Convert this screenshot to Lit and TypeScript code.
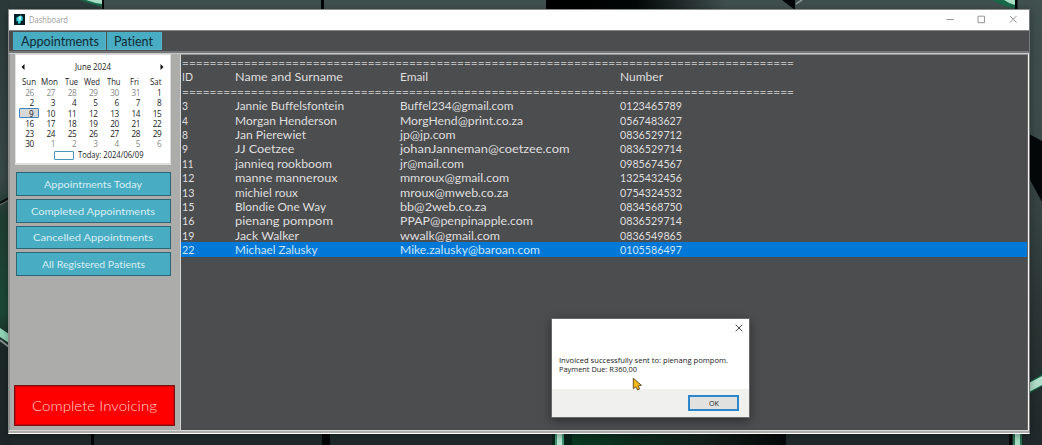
import { LitElement, html, css, svg } from "lit";
import { customElement, property } from "lit/decorators.js";

/* A single line of text stretched horizontally to a given width. */
@customElement("fit-text")
class FitText extends LitElement {
  static styles = css`
    :host { display: block; white-space: nowrap; font-variant-ligatures: none; }
    .line { display: inline-block; transform-origin: 0 50%; }
  `;
  @property() text = "";
  @property({ type: Number }) width = 0;

  updated() {
    this.style.width = `${this.width}px`;
    const line = this.renderRoot.querySelector(".line") as HTMLElement;
    line.style.transform = "none";
    const natural = line.getBoundingClientRect().width;
    if (natural > 0) line.style.transform = `scaleX(${this.width / natural})`;
  }

  render() {
    return html`<span class="line">${this.text}</span>`;
  }
}

const fit = (text: string, width: number) =>
  html`<fit-text .text=${text} .width=${width}></fit-text>`;

type Cell = [string, number];

const patients: Cell[][] = [
  [["3", 6], ["Jannie Buffelsfontein", 109], ["Buffel234@gmail.com", 113.5], ["0123465789", 62]],
  [["4", 6], ["Morgan Henderson", 102], ["MorgHend@print.co.za", 123], ["0567483627", 62]],
  [["8", 6], ["Jan Pierewiet", 71], ["jp@jp.com", 55.5], ["0836529712", 62]],
  [["9", 6], ["JJ Coetzee", 59.5], ["johanJanneman@coetzee.com", 169.5], ["0836529714", 62]],
  [["11", 11.5], ["jannieq rookboom", 97], ["jr@mail.com", 64], ["0985674567", 62]],
  [["12", 12.5], ["manne manneroux", 102.5], ["mmroux@gmail.com", 109], ["1325432456", 62]],
  [["13", 12.5], ["michiel roux", 63], ["mroux@mweb.co.za", 108.5], ["0754324532", 62]],
  [["15", 12.5], ["Blondie One Way", 91], ["bb@2web.co.za", 86.5], ["0834568750", 62]],
  [["16", 12.5], ["pienang pompom", 98], ["PPAP@penpinapple.com", 133], ["0836529714", 62]],
  [["19", 12.5], ["Jack Walker", 64], ["wwalk@gmail.com", 100], ["0836549865", 62]],
  [["22", 12.5], ["Michael Zalusky", 82.5], ["Mike.zalusky@baroan.com", 140], ["0105586497", 62]],
];
const columns: Cell[] = [["ID", 11], ["Name and Surname", 108], ["Email", 28], ["Number", 43]];
const divider = "=".repeat(89);

const days: Cell[] = [["Sun", 14], ["Mon", 17], ["Tue", 13], ["Wed", 16], ["Thu", 13.5], ["Fri", 9], ["Sat", 11.5]];
const dates = [
  26, 27, 28, 29, 30, 31, 1, 2, 3, 4, 5, 6, 7, 8, 9, 10, 11, 12, 13, 14, 15, 16, 17, 18, 19, 20,
  21, 22, 23, 24, 25, 26, 27, 28, 29, 30, 1, 2, 3, 4, 5, 6,
];

const wallpaper = svg`
  <defs>
    <linearGradient id="base" x1="0" y1="0" x2="0" y2="1">
      <stop offset="0" stop-color="#40504f"/><stop offset=".35" stop-color="#3c4a49"/>
      <stop offset=".75" stop-color="#283332"/><stop offset="1" stop-color="#1f292b"/>
    </linearGradient>
    <linearGradient id="left" x1="0" y1="0" x2="0" y2="1">
      <stop offset="0" stop-color="#2b3939"/><stop offset=".4" stop-color="#3a4949"/>
      <stop offset=".48" stop-color="#223d33"/><stop offset=".7" stop-color="#1c4a37"/>
      <stop offset=".78" stop-color="#1c2828"/><stop offset="1" stop-color="#1d2729"/>
    </linearGradient>
    <linearGradient id="shade"><stop offset="0" stop-color="#000"/><stop offset=".5" stop-color="#030707"/><stop offset="1" stop-color="#40504f"/></linearGradient>
    <linearGradient id="glow"><stop offset="0" stop-color="#0a3a22"/><stop offset=".6" stop-color="#13201c"/><stop offset="1" stop-color="#050909"/></linearGradient>
  </defs>
  <rect width="1042" height="445" fill="url(#base)"/>
  <rect width="101" height="10" fill="#2c3c3b"/>
  <rect width="10" height="445" fill="url(#left)"/>
  <path d="M80 0H103V7Q90 4 80 0Z" fill="#17694a"/>
  <path d="M86 0H102V4Q94 3 86 0Z" fill="#a9dec5"/>
  <rect x="102" width="2" height="10" fill="#020505"/>
  <rect x="321" width="3" height="10" fill="#020505"/>
  <rect x="546" width="180" height="10" fill="url(#shade)"/>
  <path d="M782 0H795V10Z" fill="#020505"/>
  <path d="M796 4L802 0" stroke="#9aa3a2" stroke-width="1.5"/>
  <path d="M992 0H1016V9Q1000 5 992 0Z" fill="#17694a"/>
  <path d="M1004 0H1015V5Q1008 3 1004 0Z" fill="#a9dec5"/>
  <rect x="1015" width="2.5" height="10" fill="#020505"/>
  <path d="M0 203L9 198" stroke="#050909" stroke-width="2"/>
  <path d="M0 205L9 200" stroke="#68716f"/>
  <path d="M0 328L9 334V343L0 337Z" fill="#93d5b7"/>
  <path d="M0 340L9 347" stroke="#879490" stroke-width="2"/>
  <path d="M1029 134L1042 141V202L1029 178Z" fill="#040808"/>
  <path d="M1029 382L1042 374V386L1029 394Z" fill="#155a3e"/>
  <path d="M1029 383L1042 376V385L1029 392Z" fill="#b1dfcb"/>
  <rect x="91" y="433" width="3" height="12" fill="#020505"/>
  <rect x="322" y="433" width="8" height="12" fill="#020505"/>
  <rect x="552" y="433" width="20" height="12" fill="#06251a"/>
  <rect x="555" y="433" width="9" height="12" fill="#3f9b77"/>
  <rect x="557" y="433" width="5" height="12" fill="#b5e3cf"/>
  <rect x="572" y="433" width="214" height="12" fill="url(#glow)"/>
  <rect x="780" y="433" width="6" height="12" fill="#050909"/>
  <rect x="1009" y="433" width="3" height="12" fill="#020505"/>
  <rect x="1013" y="433" width="9" height="12" fill="#27704f"/>
  <rect x="1015" y="433" width="5" height="12" fill="#a8dcc4"/>
`;

@customElement("app-root")
class AppRoot extends LitElement {
  static styles = css`
    * { box-sizing: border-box; }
    :host {
      display: block; position: relative; width: 1042px; height: 445px; overflow: hidden;
      font-family: Lato, "Open Sans", sans-serif; color: #dfdfdf; padding: 9px 0 0 8px;
    }
    .wallpaper { position: absolute; inset: 0; }
    .window {
      position: relative; width: 1022px; height: 425px; display: flex; flex-direction: column;
      background: #4c4d4f; border: 1px solid #8b8e8d; border-right-color: #77797a; border-bottom-color: #fff;
      box-shadow: 0 2px 8px rgba(0, 0, 0, .35);
    }
    .title {
      height: 21px; flex: none; display: flex; align-items: center; background: #fff;
      border-bottom: 1px solid #858588; color: #999; padding: 0 11px 1px 5px;
      font: 8.6px/12px "Open Sans", sans-serif;
    }
    .logo { width: 11px; height: 11px; margin-right: 3.5px; }
    .controls { margin-left: auto; }
    .menu { height: 21px; flex: none; display: flex; gap: 1px; padding: 1px 4px; }
    .menu-item {
      background: #48acc3; color: #112a34; height: 18px; font-size: 12.5px; line-height: 19.4px;
      border: 1px solid #58b4c8; border-width: 0 1px 1px 0;
    }
    .menu-item.first { width: 93px; padding-left: 7.5px; }
    .menu-item.second { width: 55px; padding-left: 7px; }
    .rule { height: 3px; flex: none; background: #76777a; border-bottom: 1px solid #c9c9c9; margin-top: -1px; }
    .body { flex: 1; display: flex; min-height: 0; border-right: 1px solid #f4f4f4; }
    .side {
      width: 171px; display: flex; flex-direction: column; background: #acacaa;
      border-left: 1px solid #8c8c8b; padding: 0 5px 4px 4px;
    }
    .calendar {
      width: 156px; height: 111px; background: #fff; border: 1px solid #dedede; border-bottom-width: 2px;
      color: #222; font: 8.3px/10px "Open Sans", sans-serif; margin: 0 0 7px 1px;
    }
    .month { display: flex; align-items: center; justify-content: space-between; height: 17px; padding: 7px 6px 0 5px; margin-bottom: 4px; }
    .days { display: grid; grid-template-columns: repeat(7, 21.25px); height: 11px; padding-left: 2px; margin-bottom: 0; }
    .day { display: flex; justify-content: center; line-height: 11px; }
    .dates { display: grid; grid-template-columns: repeat(7, 21.25px); grid-auto-rows: 10.3px; padding-left: 2px; }
    .date { text-align: right; padding-right: 5.3px; font-size: 8.2px; letter-spacing: -.3px; line-height: 11.6px; }
    .muted { color: #888; }
    .today { background: #d8d8d8; border: 1px solid #4182ba; padding-right: 5px; line-height: 9.6px; margin: 0 -.2px 0 .5px; border-radius: 1px; }
    .foot { display: flex; align-items: center; padding: 1px 0 0 38px; gap: 4px; height: 12px; }
    .box { width: 20px; height: 9px; border: 1px solid #4b96ba; border-radius: 1px; }
    .nav { display: flex; flex-direction: column; gap: 3px; margin-left: 2px; }
    .button {
      display: flex; align-items: center; justify-content: center; width: 155px; height: 23.8px;
      background: #48acc3; border: 1px solid #2e6575; color: #d8eff4; font-size: 10.2px; line-height: 14px;
      padding-right: 1px;
    }
    .invoice {
      margin-top: auto; display: flex; align-items: center; justify-content: center; width: 161px; height: 41px;
      background: #f00; border: 1px solid #801010; color: #ffd3d0; font-size: 14px; font-weight: 300;
      box-shadow: inset 0 0 0 1px #c40505;
    }
    .list { flex: 1; background: #4c4d4f; border: 1px solid #8f8f8f; border-left-color: #d5d5d5; border-bottom: 0; border-right-color: #666; }
    .row {
      height: 14.42px; display: grid; grid-template-columns: 53.2px 165px 220px 1fr; padding-left: .8px;
      font-size: 11.7px; line-height: 14.6px;
    }
    .row.divider { display: block; color: #bbb; line-height: 14px; }
    .row.selected { background: #0078d7; color: #cbe6fa; }
    .base { height: 3px; flex: none; background: #acacaa; border-top: 1px solid #d7d7d7; }
    .dialog {
      position: absolute; left: 551px; top: 318px; width: 199px; height: 100px; background: #fff;
      display: flex; flex-direction: column; border: 1px solid #69696a; box-shadow: 0 3px 9px rgba(0, 0, 0, .4);
      color: #222; font: 8px/9.6px "Open Sans", sans-serif;
    }
    .close { align-self: flex-end; margin: 5px 6px 22.6px 0; width: 8px; height: 8px; }
    .message { flex: 1; padding-left: 7px; }
    .footer { height: 28px; background: #f0f0ef; display: flex; justify-content: flex-end; padding: 6px 10px 0 0; }
    .ok { width: 51px; height: 15.5px; border: 2px solid #2e86cb; background: #e1e1e0; display: flex; justify-content: center; align-items: center; }
    .cursor { position: absolute; left: 632px; top: 377px; }
  `;

  render() {
    return html`
      <svg class="wallpaper" width="1042" height="445">${wallpaper}</svg>
      <div class="window">
        <div class="title">
          <svg class="logo" viewBox="0 0 11 11">
            <rect width="11" height="11" fill="#091d26" />
            <path d="M2.4 3.6L7 1.4L8.8 3V6.3L6.8 7.2V9L4 10V7L2.4 7.6Z" fill="#31c9d1" />
            <path d="M4.5 2.8L7 1.5V6L4.5 7Z" fill="#a5f4f2" />
          </svg>
          ${fit("Dashboard", 39)}
          <svg class="controls" width="73" height="12" fill="none" stroke="#8b8b8b" stroke-width=".9">
            <path d="M1.5 5.5H9M33 2.2H39.5V8.7H33ZM65 2L71.5 8.5M71.5 2L65 8.5" />
          </svg>
        </div>
        <div class="menu">
          <div class="menu-item first">${fit("Appointments", 78)}</div>
          <div class="menu-item second">${fit("Patient", 39)}</div>
        </div>
        <div class="rule"></div>
        <div class="body">
          <div class="side">
            <div class="calendar">
              <div class="month">
                <svg width="4" height="6"><path d="M3.5 0V6L.5 3Z" fill="#111" /></svg>
                ${fit("June 2024", 36)}
                <svg width="4" height="6"><path d="M.5 0V6L3.5 3Z" fill="#111" /></svg>
              </div>
              <div class="days">${days.map(([d, w]) => html`<div class="day">${fit(d, w)}</div>`)}</div>
              <div class="dates">
                ${dates.map((d, i) => html`<div class="date ${i < 6 || i > 35 ? "muted" : ""} ${i === 14 ? "today" : ""}">${d}</div>`)}
              </div>
              <div class="foot"><div class="box"></div>${fit("Today: 2024/06/09", 65.5)}</div>
            </div>
            <div class="nav">
              <div class="button">${fit("Appointments Today", 98)}</div>
              <div class="button">${fit("Completed Appointments", 124)}</div>
              <div class="button">${fit("Cancelled Appointments", 120)}</div>
              <div class="button">${fit("All Registered Patients", 103)}</div>
            </div>
            <div class="invoice">${fit("Complete Invoicing", 125)}</div>
          </div>
          <div class="list">
            <div class="row divider">${fit(divider, 612)}</div>
            <div class="row">${columns.map(([t, w]) => fit(t, w))}</div>
            <div class="row divider">${fit(divider, 612)}</div>
            ${patients.map((p, i) => html`<div class="row ${i === 10 ? "selected" : ""}">${p.map(([t, w]) => fit(t, w))}</div>`)}
          </div>
        </div>
        <div class="base"></div>
      </div>
      <div class="dialog">
        <svg class="close" viewBox="0 0 8 8"><path d="M.7 .7L7.3 7.3M7.3 .7L.7 7.3" stroke="#333" stroke-width=".9" /></svg>
        <div class="message">
          ${fit("Invoiced successfully sent to: pienang pompom.", 169)}
          ${fit("Payment Due: R360,00", 78)}
        </div>
        <div class="footer"><div class="ok">${fit("OK", 10)}</div></div>
      </div>
      <svg class="cursor" width="11" height="15" viewBox="0 0 11 15">
        <path d="M1.3 1.2V11.8L3.8 9.8L5.6 13L7.6 12L6.2 8.9L9.4 8.3Z" fill="#f5b91b" stroke="#594519" stroke-width=".9" />
      </svg>
    `;
  }
}
